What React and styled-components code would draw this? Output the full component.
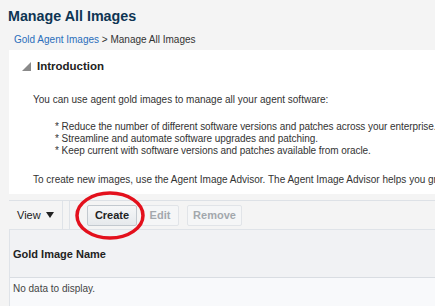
import styled, { createGlobalStyle } from "styled-components";

const Global = createGlobalStyle`
  html, body {
    margin: 0;
    padding: 0;
  }
  body {
    width: 435px;
    height: 306px;
    overflow: hidden;
    background: #f4f4f4;
    font-family: "Liberation Sans", Arial, sans-serif;
    color: #333;
  }
`;

const Page = styled.div`
  position: relative;
  width: 435px;
  height: 306px;
  overflow: hidden;
`;

const Title = styled.h1`
  margin: 0;
  padding: 6px 0 0 8px;
  font-size: 14.3px;
  line-height: 20px;
  font-weight: bold;
  color: #0e3453;
  white-space: nowrap;
`;

const Crumbs = styled.div`
  margin: 7px 0 3px 14px;
  font-size: 10px;
  line-height: 14px;
  color: #333;
  white-space: nowrap;
`;

const CrumbLink = styled.a`
  color: #2a6ebb;
  text-decoration: none;
`;

const Panel = styled.section`
  margin-left: 9px;
  background: #fff;
  padding-bottom: 7px;
`;

const PanelHead = styled.div`
  display: flex;
  align-items: center;
  gap: 6px;
  height: 32px;
  padding-left: 13px;
`;

const PanelTitle = styled.h2`
  margin: 0;
  font-size: 11.5px;
  font-weight: bold;
  color: #222;
`;

const Text = styled.p`
  margin: ${(p) => p.$top || 0}px 0 0 24px;
  font-size: 10px;
  line-height: 14px;
  color: #333;
  white-space: nowrap;
`;

const Bullets = styled.div`
  margin: 14px 0 0 46px;
  font-size: 10px;
  line-height: 12px;
  letter-spacing: -0.06px;
  color: #333;
  white-space: nowrap;
`;

const Toolbar = styled.div`
  display: flex;
  align-items: center;
  margin: 6px 0 0 9px;
  height: 28px;
  border-top: 1px solid #dde1e6;
  background: #f4f4f4;
`;

const ViewMenu = styled.div`
  display: flex;
  align-items: center;
  gap: 5px;
  padding-left: 8px;
  width: 45px;
  font-size: 11px;
  color: #222;
`;

const Sep = styled.div`
  align-self: stretch;
  width: 1px;
  background: #dfe3e8;
  margin-right: 6px;
`;

const Button = styled.button`
  width: ${(p) => p.$w}px;
  height: 21px;
  padding: 0;
  margin-right: ${(p) => p.$gap || 4}px;
  font-family: inherit;
  font-size: 11px;
  font-weight: bold;
  border-radius: 2px;
  border: 1px solid ${(p) => (p.disabled ? "#e1e4e8" : "#c3c9cf")};
  background: ${(p) =>
    p.disabled ? "#f5f6f7" : "linear-gradient(#f6f7f8, #e6e9ec)"};
  color: ${(p) => (p.disabled ? "#a3a8ad" : "#222")};
`;

const Table = styled.div`
  margin-left: 9px;
  border-left: 1px solid #dfe3e8;
  border-top: 1px solid #dfe3e8;
`;

const HeadRow = styled.div`
  display: flex;
  align-items: center;
  height: 47px;
  padding-left: 3px;
  background: #f1f2f4;
  border-bottom: 1px solid #d9dde2;
  font-size: 11px;
  font-weight: bold;
  color: #222;
`;

const EmptyRow = styled.div`
  padding: 4px 0 0 3px;
  height: 40px;
  background: #f8f9fb;
  font-size: 10px;
  line-height: 14px;
  color: #444;
`;

const Mark = styled.svg`
  position: absolute;
  left: 74px;
  top: 190px;
  pointer-events: none;
`;

export default function App() {
  return (
    <Page>
      <Global />
      <Title>Manage All Images</Title>
      <Crumbs>
        <CrumbLink href="#">Gold Agent Images</CrumbLink> &gt; Manage All Images
      </Crumbs>
      <Panel>
        <PanelHead>
          <svg width="9" height="9" viewBox="0 0 9 9">
            <path d="M0 9 L9 9 L9 0 Z" fill="#8a8a8a" />
          </svg>
          <PanelTitle>Introduction</PanelTitle>
        </PanelHead>
        <Text $top={11}>
          You can use agent gold images to manage all your agent software:
        </Text>
        <Bullets>
          <div>* Reduce the number of different software versions and patches across your enterprise.</div>
          <div>* Streamline and automate software upgrades and patching.</div>
          <div>* Keep current with software versions and patches available from oracle.</div>
        </Bullets>
        <Text $top={16}>
          To create new images, use the Agent Image Advisor. The Agent Image Advisor helps you group
        </Text>
      </Panel>
      <Toolbar>
        <ViewMenu>
          View
          <svg width="8" height="6" viewBox="0 0 8 6">
            <path d="M0 0 L8 0 L4 6 Z" fill="#222" />
          </svg>
        </ViewMenu>
        <Sep />
        <Sep />
        <div style={{ width: 11 }} />
        <Button $w={50}>Create</Button>
        <Button disabled $w={38} $gap={8}>Edit</Button>
        <Button disabled $w={55}>Remove</Button>
      </Toolbar>
      <Table>
        <HeadRow>Gold Image Name</HeadRow>
        <EmptyRow>No data to display.</EmptyRow>
      </Table>
      <Mark width="72" height="52" viewBox="0 0 72 52">
        <ellipse cx="36" cy="25.5" rx="33" ry="22.5" fill="none" stroke="#e3101c" strokeWidth="3.5" />
      </Mark>
    </Page>
  );
}
